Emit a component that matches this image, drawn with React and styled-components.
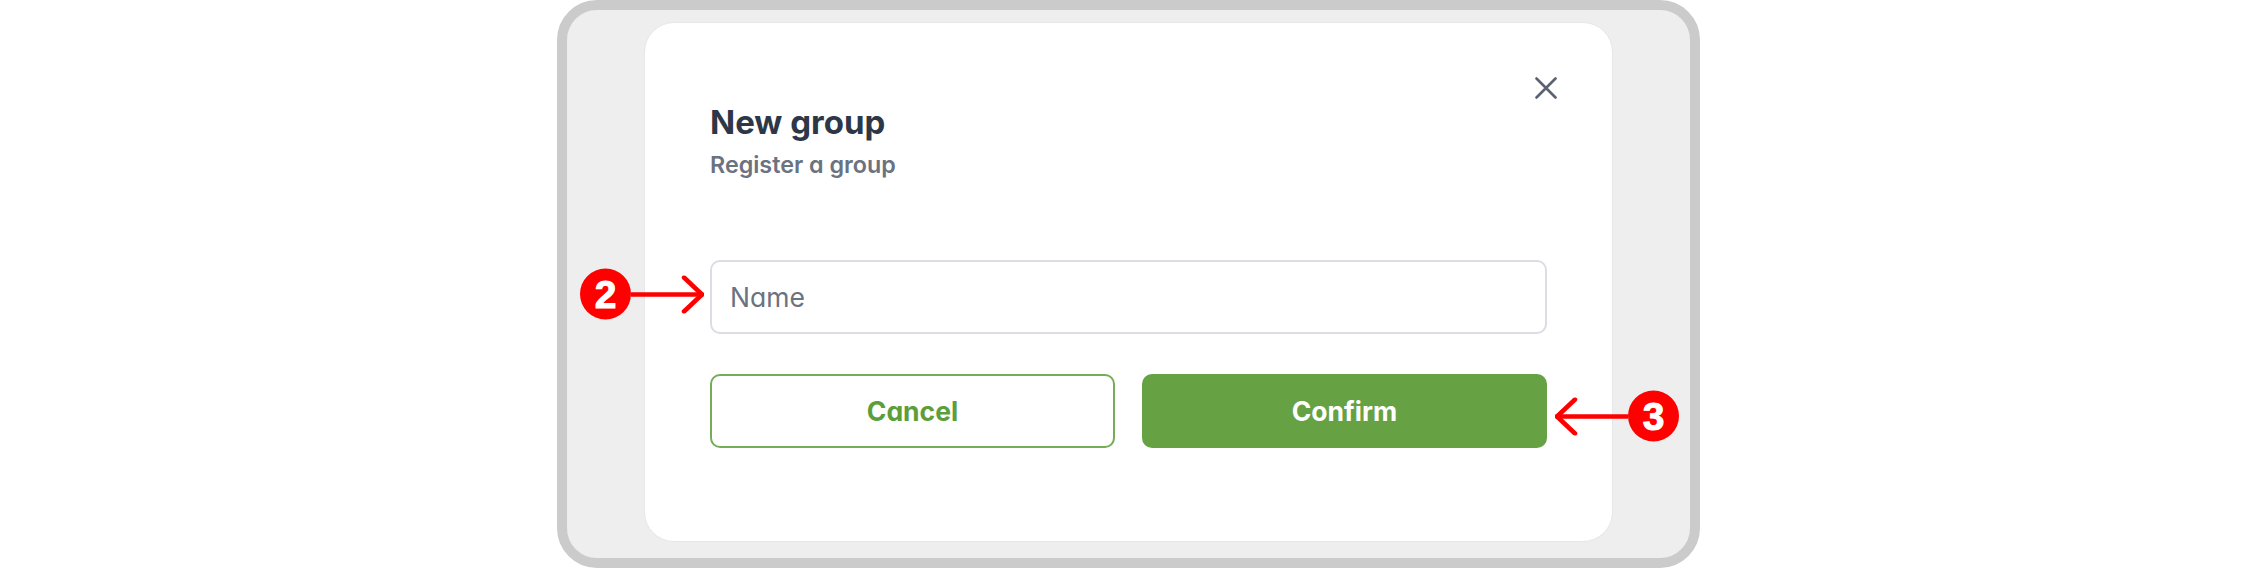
import React from "react";
import styled, { createGlobalStyle } from "styled-components";

const GlobalStyle = createGlobalStyle`
  html, body {
    margin: 0;
    padding: 0;
    background: #fff;
  }
  body {
    font-family: Inter, "Liberation Sans", sans-serif;
    font-feature-settings: "cv11" 1;
  }
`;

const Page = styled.div`
  display: flex;
  justify-content: center;
  width: 100%;
  height: 568px;
  overflow: hidden;
`;

const Frame = styled.div`
  box-sizing: border-box;
  width: 1143px;
  height: 568px;
  padding: 12px 77px 16px 77px;
  border: 10px solid #cbcbcb;
  border-radius: 40px;
  background: #eeeeee;
`;

const Modal = styled.div`
  box-sizing: border-box;
  height: 100%;
  padding: 54px 65px 0;
  border: 1px solid #e6e7ea;
  border-radius: 30px;
  background: #fff;
`;

const Header = styled.div`
  display: flex;
  justify-content: space-between;
  align-items: flex-start;
  height: 183px;
`;

const TitleBlock = styled.div`
  padding-top: 25px;
`;

const Title = styled.h2`
  margin: 0;
  font-size: 33px;
  line-height: 40px;
  font-weight: 700;
  color: #2d3748;
`;

const Subtitle = styled.p`
  margin: 9px 0 0;
  font-size: 23.3px;
  line-height: 28px;
  font-weight: 600;
  color: #6b7280;
`;

const CloseButton = styled.button`
  display: flex;
  margin: 0 -10px 0 0;
  padding: 0;
  border: 0;
  background: none;
  color: #5b6373;
`;

const Anchor = styled.div`
  position: relative;
  display: flex;
`;

const NameInput = styled.input`
  box-sizing: border-box;
  width: 100%;
  height: 74px;
  padding: 0 18px;
  border: 2px solid #dadde3;
  border-radius: 10px;
  outline: none;
  background: #fff;
  font-family: inherit;
  font-feature-settings: inherit;
  font-size: 26.5px;
  color: #6b7280;

  &::placeholder {
    color: #6b7280;
    opacity: 1;
  }
`;

const Actions = styled.div`
  display: grid;
  grid-template-columns: 1fr 1fr;
  gap: 27px;
  margin-top: 40px;
`;

const ActionButton = styled.button`
  box-sizing: border-box;
  width: 100%;
  height: 74px;
  padding: 0;
  border: 2px solid ${p => (p.$primary ? "#66a243" : "#74ad55")};
  border-radius: 10px;
  background: ${p => (p.$primary ? "#66a243" : "#fff")};
  color: ${p => (p.$primary ? "#fff" : "#5c9e3a")};
  font-family: inherit;
  font-feature-settings: inherit;
  font-size: 26.5px;
  font-weight: 700;
`;

const Callout = styled.div`
  position: absolute;
  top: calc(50% + ${p => p.$shift}px);
  ${p => (p.$side === "left" ? "right: calc(100% + 6px);" : "left: calc(100% + 8px);")}
  display: flex;
  align-items: center;
  transform: translateY(-50%);
`;

const Badge = styled.span`
  display: flex;
  flex: none;
  align-items: center;
  justify-content: center;
  width: 51px;
  height: 51px;
  border-radius: 50%;
  background: #ff0000;
  color: #fff;
  font-family: "Liberation Sans", Arial, sans-serif;
  font-size: 39px;
  font-weight: 700;
  -webkit-text-stroke: 1px #fff;
`;

const Arrow = ({ flip }) => (
  <svg width="73" height="38" viewBox="0 0 73 38" fill="none" stroke="#ff0000" strokeWidth="4.5" strokeLinecap="round" strokeLinejoin="round" style={{ flex: "none", transform: flip ? "scaleX(-1)" : undefined }}>
    <path d="M0 19H71" />
    <path d="M53 2L71 19L53 36" />
  </svg>
);

const App = () => (
  <Page>
    <GlobalStyle />
    <Frame>
      <Modal>
        <Header>
          <TitleBlock>
            <Title>New group</Title>
            <Subtitle>Register a group</Subtitle>
          </TitleBlock>
          <CloseButton aria-label="Close">
            <svg width="22" height="22" viewBox="0 0 22 22" fill="none" stroke="currentColor" strokeWidth="2.6" strokeLinecap="round">
              <path d="M1.5 1.5L20.5 20.5M20.5 1.5L1.5 20.5" />
            </svg>
          </CloseButton>
        </Header>
        <Anchor>
          <NameInput placeholder="Name" />
          <Callout $side="left" $shift={-3}>
            <Badge>2</Badge>
            <Arrow />
          </Callout>
        </Anchor>
        <Actions>
          <ActionButton>Cancel</ActionButton>
          <Anchor>
            <ActionButton $primary>Confirm</ActionButton>
            <Callout $side="right" $shift={5}>
              <Arrow flip />
              <Badge>3</Badge>
            </Callout>
          </Anchor>
        </Actions>
      </Modal>
    </Frame>
  </Page>
);

export default App;
